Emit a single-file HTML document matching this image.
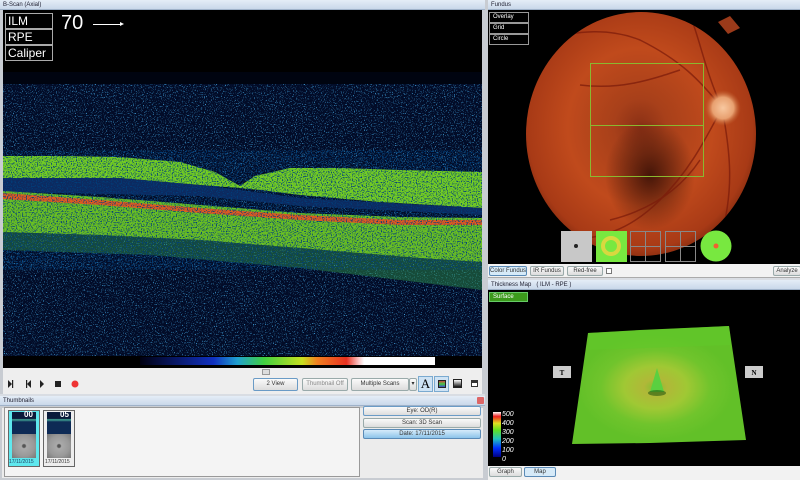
<!DOCTYPE html>
<html><head><meta charset="utf-8">
<style>
*{margin:0;padding:0;box-sizing:border-box}
body{width:800px;height:480px;overflow:hidden;background:#d9dde3;font-family:"Liberation Sans",sans-serif;position:relative}
.abs{position:absolute}
.title{position:absolute;height:10px;background:linear-gradient(#e4edf7,#c9d8ea);font-size:6px;color:#223;padding-left:3px;line-height:10px;border-bottom:1px solid #9fb2c9}
.btn{position:absolute;font-size:6px;text-align:center;color:#333;border:1px solid #9aa;border-radius:2px;background:linear-gradient(#fafafa,#dcdcdc);white-space:nowrap;overflow:hidden}
.lbl{position:absolute;border:1px solid #aaa;color:#fff;font-size:12px;line-height:14px;padding-left:2px;background:#000}
.flbl{position:absolute;border:1px solid #999;color:#fff;font-size:6px;line-height:9px;padding-left:3px;background:#000;width:40px;height:11px}
</style></head><body>
<div class="title" style="left:0;top:0;width:485px">B-Scan (Axial)</div>
<div class="abs" style="left:0;top:10px;width:485px;height:358px;background:#000;border-left:3px solid #c8ccd2;border-right:3px solid #c8ccd2"></div>
<svg class="abs" style="left:3px;top:10px" width="479" height="358" viewBox="3 10 479 358">
<defs>
<filter id="nz" x="0" y="0" width="100%" height="100%">
<feTurbulence type="fractalNoise" baseFrequency="0.9" numOctaves="1" seed="3"/>
<feColorMatrix type="matrix" values="0 0 0 0 0.05  0 0 0 0 0.35  0 0 0 0 0.7  0 0 0 6 -3.5"/>
</filter>
<filter id="nz2" x="0" y="0" width="100%" height="100%">
<feTurbulence type="fractalNoise" baseFrequency="0.8" numOctaves="1" seed="7"/>
<feColorMatrix type="matrix" values="0 0 0 0 0  0 0 0 0 0.05  0 0 0 0 0.2  0 0 0 -5 2.5"/>
</filter>
<linearGradient id="cb" x1="0" x2="1">
<stop offset="0" stop-color="#000010"/><stop offset="0.25" stop-color="#1030c0"/><stop offset="0.33" stop-color="#20a0d0"/><stop offset="0.42" stop-color="#40d040"/><stop offset="0.55" stop-color="#c8e020"/><stop offset="0.6" stop-color="#f08020"/><stop offset="0.7" stop-color="#e83020"/><stop offset="0.74" stop-color="#f8c0c0"/><stop offset="0.76" stop-color="#fff"/><stop offset="1" stop-color="#fff"/></linearGradient>
</defs>
<rect x="3" y="72" width="479" height="12" fill="#000410"/>
<rect x="3" y="84" width="479" height="272" fill="#020c28"/>
<rect x="3" y="84" width="479" height="272" filter="url(#nz)"/>
<path d="M3 156 L60 156 L120 157 L180 162 L215 172 L240 186 L255 176 L290 168 L340 168 L400 170 L482 172 L482 208 L380 202 L300 195 L260 190 L240 188 L200 185 L120 178 L3 178 Z" fill="#80e020" opacity="0.9"/>
<path d="M3 178 L120 178 L200 185 L240 190 L300 198 L482 208 L482 215 L300 206 L200 196 L3 192 Z" fill="#0c2a60"/>
<path d="M3 191 L100 197 L200 205 L300 213 L400 217 L482 218 L482 262 L420 258 L300 248 L200 240 L100 235 L3 232 Z" fill="#74d020" opacity="0.9"/>
<path d="M3 193 L100 200 L200 208 L300 215 L400 220 L482 220 L482 225 L400 225 L300 220 L200 213 L100 205 L3 199 Z" fill="#e05a20"/>
<path d="M3 232 L100 235 L200 240 L300 248 L420 258 L482 262 L482 290 L300 268 L150 255 L3 250 Z" fill="#2a8a4a" opacity="0.5"/>
<rect x="3" y="150" width="479" height="120" filter="url(#nz2)"/>
<rect x="140" y="357" width="295" height="8" fill="url(#cb)"/>
</svg>
<div class="lbl" style="left:5px;top:13px;width:48px;height:16px">ILM</div>
<div class="lbl" style="left:5px;top:29px;width:48px;height:16px">RPE</div>
<div class="lbl" style="left:5px;top:45px;width:48px;height:16px">Caliper</div>
<div class="abs" style="left:61px;top:12px;color:#fff;font-size:20px">70</div>
<div class="abs" style="left:93px;top:24px;width:28px;height:1px;background:#fff"></div>
<div class="abs" style="left:120px;top:22px;border-left:4px solid #fff;border-top:2.5px solid transparent;border-bottom:2.5px solid transparent"></div>
<div class="abs" style="left:0;top:368px;width:485px;height:26px;background:#eeeeee;border-left:3px solid #c8ccd2;border-right:3px solid #c8ccd2"></div>
<div class="abs" style="left:262px;top:369px;width:8px;height:6px;background:#ddd;border:1px solid #999"></div>
<svg class="abs" style="left:0;top:376px" width="90" height="16">
<g fill="#222"><path d="M8 4 L12 8 L8 12 Z"/><rect x="12" y="4" width="1.2" height="8"/>
<rect x="26" y="4" width="1.2" height="8"/><path d="M31 4 L27 8 L31 12 Z"/>
<path d="M40 4 L44 8 L40 12 Z"/><rect x="55" y="5" width="6" height="6"/></g>
<circle cx="75" cy="8" r="3.5" fill="#e33"/></svg>
<div class="btn" style="left:253px;top:378px;width:45px;height:13px;line-height:11px;border-color:#6a9bc6">2 View</div>
<div class="btn" style="left:302px;top:378px;width:46px;height:13px;line-height:11px;color:#888">Thumbnail Off</div>
<div class="btn" style="left:351px;top:378px;width:58px;height:13px;line-height:11px">Multiple Scans</div>
<div class="btn" style="left:409px;top:378px;width:8px;height:13px;line-height:11px">▾</div>
<div class="abs" style="left:418px;top:376px;width:15px;height:16px;background:#cfe3f4;border:1px solid #7aaad0;font-family:'Liberation Serif',serif;font-size:13px;text-align:center;line-height:14px">A</div>
<div class="abs" style="left:434px;top:376px;width:15px;height:16px;background:#cfe3f4;border:1px solid #7aaad0"><div style="margin:3px;width:8px;height:8px;background:linear-gradient(#c44,#4c4,#44c);border:1px solid #222"></div></div>
<div class="abs" style="left:453px;top:379px;width:9px;height:9px;background:linear-gradient(#fff,#111);border:1px solid #222"></div>
<div class="abs" style="left:471px;top:380px;width:7px;height:7px;background:linear-gradient(#333 40%,#fff 40%);border:1px solid #333"></div>
<div class="title" style="left:0;top:396px;width:485px">Thumbnails</div>
<div class="abs" style="left:477px;top:397px;width:7px;height:7px;background:#d66;border-radius:1px"></div>
<div class="abs" style="left:0;top:406px;width:485px;height:74px;background:#ececec;border:2px solid #c8ccd2"></div>
<div class="abs" style="left:4px;top:407px;width:356px;height:70px;background:#f4f4f4;border:1px solid #999"></div>
<div class="abs" style="left:8px;top:410px;width:32px;height:57px;background:#5ee8ee;border:1px solid #666"></div>
<div class="abs" style="left:12px;top:412px;width:24px;height:22px;background:linear-gradient(#0a1a3a 30%,#4a9 35%,#0d2a55 45%)"></div>
<div class="abs" style="left:12px;top:434px;width:24px;height:24px;background:radial-gradient(#555 8%,#aaa 15%,#999 60%,#777)"></div>
<div class="abs" style="left:43px;top:410px;width:32px;height:57px;background:#eee;border:1px solid #666"></div>
<div class="abs" style="left:47px;top:412px;width:24px;height:22px;background:linear-gradient(#0a1a3a 30%,#4a9 35%,#0d2a55 45%)"></div>
<div class="abs" style="left:47px;top:434px;width:24px;height:24px;background:radial-gradient(#555 8%,#aaa 15%,#999 60%,#777)"></div>
<div class="abs" style="left:24px;top:410px;font-size:8px;color:#fff;font-weight:bold">00</div>
<div class="abs" style="left:60px;top:410px;font-size:8px;color:#fff;font-weight:bold">05</div>
<div class="abs" style="left:9px;top:459px;font-size:5px;color:#246">17/11/2015</div>
<div class="abs" style="left:45px;top:459px;font-size:5px;color:#333">17/11/2015</div>
<div class="btn" style="left:363px;top:406px;width:118px;height:10px;line-height:9px;border-color:#6a9bc6">Eye: OD(R)</div>
<div class="btn" style="left:363px;top:418px;width:118px;height:10px;line-height:9px">Scan: 3D Scan</div>
<div class="btn" style="left:363px;top:429px;width:118px;height:10px;line-height:9px;background:linear-gradient(#d6ebfa,#8cc4ea);border-color:#5a8ab6">Date: 17/11/2015</div>

<div class="abs" style="left:485px;top:0;width:3px;height:480px;background:#c8ccd2"></div>
<div class="title" style="left:488px;top:0;width:312px">Fundus</div>
<div class="abs" style="left:488px;top:10px;width:312px;height:254px;background:#000"></div>
<svg class="abs" style="left:488px;top:10px" width="312" height="254" viewBox="488 10 312 254">
<defs>
<radialGradient id="fg" cx="0.5" cy="0.45" r="0.55">
<stop offset="0" stop-color="#8a3015"/><stop offset="0.2" stop-color="#a8401a"/><stop offset="0.55" stop-color="#c04a1c"/><stop offset="0.85" stop-color="#a83a16"/><stop offset="1" stop-color="#6a200a"/></radialGradient>
<radialGradient id="mac"><stop offset="0" stop-color="#2a0a04" stop-opacity="0.8"/><stop offset="1" stop-color="#2a0a04" stop-opacity="0"/></radialGradient>
<radialGradient id="od"><stop offset="0" stop-color="#f8c8a0"/><stop offset="0.6" stop-color="#e8a070"/><stop offset="1" stop-color="#c06030" stop-opacity="0"/></radialGradient>
<clipPath id="cc"><ellipse cx="641" cy="134" rx="115" ry="122"/></clipPath>
</defs>
<g clip-path="url(#cc)">
<rect x="520" y="10" width="240" height="260" fill="url(#fg)"/>
<ellipse cx="650" cy="175" rx="45" ry="55" fill="url(#mac)"/>
<g fill="none" stroke="#7a1a0a" stroke-width="1.5" opacity="0.7">
<path d="M722 108 C700 80 680 60 640 40 C610 28 580 30 540 40"/>
<path d="M722 108 C705 70 700 40 690 15"/>
<path d="M722 108 C705 140 690 170 660 200 C630 230 600 240 560 240"/>
<path d="M722 108 C730 150 735 190 720 240"/>
<path d="M680 70 C650 80 620 90 580 85"/>
<path d="M700 160 C680 190 650 210 610 220"/>
</g>
</g>
<path d="M718 22 L730 16 L740 28 L728 34 Z" fill="#9a3a1a"/>
<circle cx="723" cy="108" r="18" fill="url(#od)"/>
<rect x="590.5" y="63.5" width="113" height="113" fill="none" stroke="#8ab830" stroke-width="1"/>
<line x1="590" y1="125.5" x2="704" y2="125.5" stroke="#8ab830"/>
<rect x="561" y="231" width="31" height="31" fill="#c8c8c8"/>
<circle cx="576" cy="246" r="2" fill="#222"/>
<rect x="596" y="231" width="31" height="31" fill="#78e840"/>
<circle cx="611" cy="246" r="8" fill="none" stroke="#d8d840" stroke-width="4"/>
<g fill="none" stroke="#888" stroke-width="1"><rect x="630.5" y="231.5" width="30" height="30"/><line x1="645.5" y1="231" x2="645.5" y2="262"/><line x1="630" y1="246.5" x2="661" y2="246.5"/>
<rect x="665.5" y="231.5" width="30" height="30"/><line x1="680.5" y1="231" x2="680.5" y2="262"/><line x1="665" y1="246.5" x2="696" y2="246.5"/></g>
<circle cx="716" cy="246" r="15.5" fill="#78e840"/>
<circle cx="716" cy="246" r="2.5" fill="#f06030"/>
</svg>
<div class="flbl" style="left:489px;top:12px">Overlay</div>
<div class="flbl" style="left:489px;top:23px">Grid</div>
<div class="flbl" style="left:489px;top:34px">Circle</div>
<div class="abs" style="left:488px;top:264px;width:312px;height:14px;background:#f2f2f2;border-bottom:1px solid #aaa"></div>
<div class="btn" style="left:489px;top:266px;width:38px;height:10px;line-height:9px;background:#d6eaf8;border-color:#5a8ab6">Color Fundus</div>
<div class="btn" style="left:530px;top:266px;width:34px;height:10px;line-height:9px">IR Fundus</div>
<div class="btn" style="left:567px;top:266px;width:36px;height:10px;line-height:9px">Red-free</div>
<div class="abs" style="left:606px;top:268px;width:6px;height:6px;border:1px solid #777;background:#fff"></div>
<div class="btn" style="left:773px;top:266px;width:28px;height:10px;line-height:9px">Analyze</div>
<div class="title" style="left:488px;top:280px;width:312px">Thickness Map &nbsp; ( ILM - RPE )</div>
<div class="abs" style="left:488px;top:290px;width:312px;height:176px;background:#000"></div>
<div class="abs" style="left:489px;top:292px;width:39px;height:10px;background:#3c9a1c;border:1px solid #6c6;color:#fff;font-size:6px;line-height:8px;padding-left:3px">Surface</div>
<svg class="abs" style="left:488px;top:290px" width="312" height="176" viewBox="488 290 312 176">
<defs>
<radialGradient id="sg" cx="0.48" cy="0.52" r="0.45">
<stop offset="0" stop-color="#80c030"/><stop offset="0.15" stop-color="#b0b838"/><stop offset="0.4" stop-color="#a0c834"/><stop offset="0.7" stop-color="#70c42c"/><stop offset="1" stop-color="#62c028"/></radialGradient>
<linearGradient id="lg" x1="0" y1="1" x2="0" y2="0">
<stop offset="0" stop-color="#000080"/><stop offset="0.2" stop-color="#0030ff"/><stop offset="0.4" stop-color="#20c0c0"/><stop offset="0.6" stop-color="#60e020"/><stop offset="0.75" stop-color="#e0e020"/><stop offset="0.9" stop-color="#f02020"/><stop offset="1" stop-color="#fff"/></linearGradient>
</defs>
<path d="M588 333 L640 330 L729 326 L746 440 L650 443 L572 444 Z" fill="url(#sg)"/>
<path d="M588 333 L729 326 L731 345 L590 350 Z" fill="#60c82a" opacity="0.6"/>
<path d="M650 392 L657 368 L664 392 Z" fill="#5ad040"/>
<ellipse cx="657" cy="393" rx="9" ry="3" fill="#2a5a10" opacity="0.6"/>
<rect x="553" y="366" width="18" height="12" fill="#ccc"/>
<text x="562" y="375" font-size="7" text-anchor="middle" font-family="Liberation Serif" font-weight="bold">T</text>
<rect x="745" y="366" width="18" height="12" fill="#ccc"/>
<text x="754" y="375" font-size="7" text-anchor="middle" font-family="Liberation Serif" font-weight="bold">N</text>
<rect x="493" y="412" width="8" height="45" fill="url(#lg)"/>
<g fill="#fff" font-size="7" font-style="italic" font-family="Liberation Sans"><text x="502" y="416">500</text><text x="502" y="425">400</text><text x="502" y="434">300</text><text x="502" y="443">200</text><text x="502" y="452">100</text><text x="502" y="461">0</text></g>
</svg>
<div class="abs" style="left:488px;top:466px;width:312px;height:14px;background:#f2f2f2"></div>
<div class="btn" style="left:489px;top:467px;width:33px;height:10px;line-height:9px">Graph</div>
<div class="btn" style="left:524px;top:467px;width:32px;height:10px;line-height:9px;background:#d6eaf8;border-color:#5a8ab6">Map</div>
</body></html>
